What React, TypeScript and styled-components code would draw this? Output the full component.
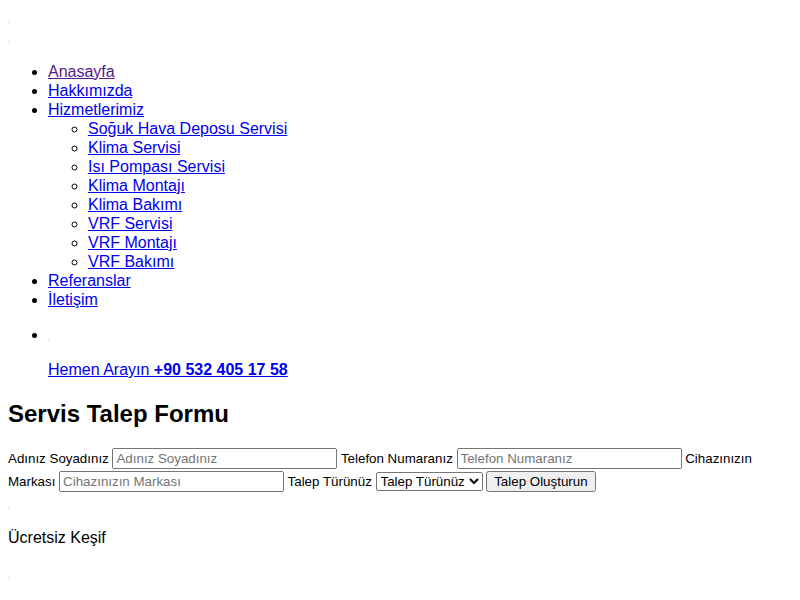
import React from 'react'
import styled, { createGlobalStyle } from 'styled-components'

const GlobalStyle = createGlobalStyle`
    body {
        margin: 8px;
        font-family: "Liberation Sans", Arial, sans-serif;
        font-size: 16px;
        line-height: 19px;
        color: #000;
        background: #fff;
    }
`

const Dot = styled.span`
    display: inline-block;
    width: 1px;
    height: 1px;
    background: #c8c8c8;
`

const Line = styled.div``

const Menu = styled.ul`
    margin: 16px 0;
    padding-left: 40px;
    list-style: disc;
`

const SubMenu = styled.ul`
    margin: 0;
    padding-left: 40px;
    list-style: circle;
`

const Link = styled.a<{ $visited?: boolean }>`
    color: ${(p) => (p.$visited ? '#551a8b' : '#0000ee')};
    text-decoration: underline;
`

const Para = styled.p`
    margin: 16px 0;
`

const Title = styled.h2`
    font-size: 24px;
    line-height: 29px;
    font-weight: bold;
    margin: 19.92px 0 19px;
`

const Form = styled.form`
    font-size: 13.333px;
    line-height: 23px;
`

const Label = styled.label`
    font-size: 13.333px;
`

const TextInput = styled.input`
    font-family: "Liberation Sans", Arial, sans-serif;
    font-size: 13.333px;
    width: 225px;
    box-sizing: border-box;
    &::placeholder {
        color: #757575;
    }
`

const Select = styled.select`
    font-family: "Liberation Sans", Arial, sans-serif;
    font-size: 13.333px;
`

const Button = styled.button`
    font-family: "Liberation Sans", Arial, sans-serif;
    font-size: 13.333px;
`

const services = [
    'Soğuk Hava Deposu Servisi',
    'Klima Servisi',
    'Isı Pompası Servisi',
    'Klima Montajı',
    'Klima Bakımı',
    'VRF Servisi',
    'VRF Montajı',
    'VRF Bakımı',
]

const App = () => {
    return (
        <>
            <GlobalStyle />
            <Line><Dot /></Line>
            <Line><Dot /></Line>
            <Menu>
                <li><Link href="#" $visited>Anasayfa</Link></li>
                <li><Link href="#">Hakkımızda</Link></li>
                <li>
                    <Link href="#">Hizmetlerimiz</Link>
                    <SubMenu>
                        {services.map((s) => (
                            <li key={s}><Link href="#">{s}</Link></li>
                        ))}
                    </SubMenu>
                </li>
                <li><Link href="#">Referanslar</Link></li>
                <li><Link href="#">İletişim</Link></li>
                <li>
                    <Para><Dot /></Para>
                    <Para>
                        <Link href="#">Hemen Arayın <b>+90 532 405 17 58</b></Link>
                    </Para>
                </li>
            </Menu>
            <Title>Servis Talep Formu</Title>
            <Form onSubmit={(e) => e.preventDefault()}>
                <Label>Adınız Soyadınız</Label> <TextInput placeholder="Adınız Soyadınız" />{' '}
                <Label>Telefon Numaranız</Label> <TextInput placeholder="Telefon Numaranız" />{' '}
                <Label>Cihazınızın Markası</Label> <TextInput placeholder="Cihazınızın Markası" />{' '}
                <Label>Talep Türünüz</Label>{' '}
                <Select defaultValue="">
                    <option value="">Talep Türünüz</option>
                    <option value="servis">Servis</option>
                    <option value="montaj">Montaj</option>
                    <option value="bakim">Bakım</option>
                </Select>{' '}
                <Button type="submit">Talep Oluşturun</Button>
            </Form>
            <Line><Dot /></Line>
            <Para>Ücretsiz Keşif</Para>
            <Line><Dot /></Line>
        </>
    )
}

export default App
